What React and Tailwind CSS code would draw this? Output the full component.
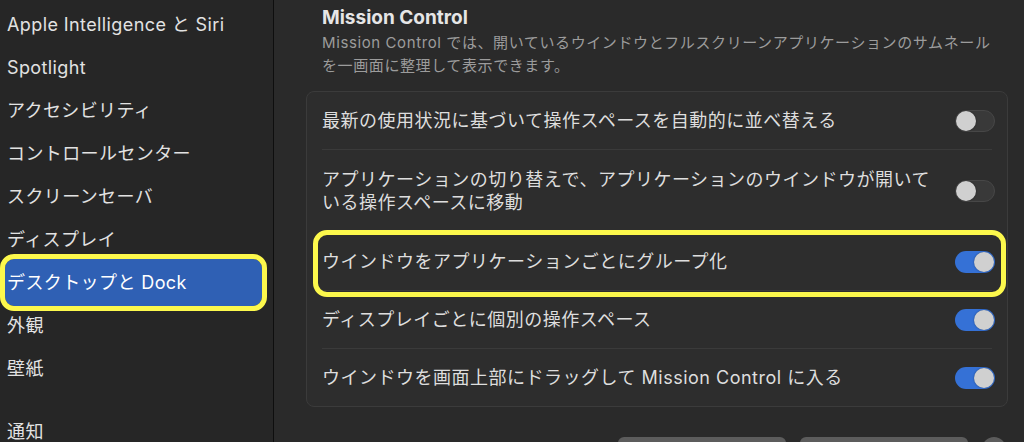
import React from "react";

const sidebarItems = [
  "Apple Intelligence と Siri",
  "Spotlight",
  "アクセシビリティ",
  "コントロールセンター",
  "スクリーンセーバ",
  "ディスプレイ",
  "デスクトップと Dock",
  "外観",
  "壁紙",
];

const Toggle = ({ on }) => (
  <div
    className={`flex h-[22px] w-[40px] shrink-0 items-center rounded-full ${
      on ? "justify-end bg-[#3571d6] px-[1px]" : "justify-start border border-[#474747] bg-[#393939]"
    }`}
  >
    <div className="h-[20px] w-[20px] rounded-full bg-[#d0d0d0] shadow-[0_0_2px_rgba(0,0,0,0.4)]" />
  </div>
);

const Row = ({ children, on, highlight, tall }) => (
  <div className={`relative flex items-center justify-between pl-[15px] pr-[12px] ${tall ? "py-[18px]" : "py-[17px]"}`}>
    <p className="text-[18px] leading-[23px] tracking-[0.5px] text-[#dedede]">{children}</p>
    <Toggle on={on} />
    {/* annotation box */}
    {highlight && (
      <div className="pointer-events-none absolute -top-[3px] -bottom-[7px] left-[6px] right-[1px] rounded-[14px] border-[5px] border-[#fcf84c]" />
    )}
  </div>
);

const Divider = () => <div className="mx-[15px] h-px bg-[#3a3a3a]" />;

export default function App() {
  return (
    <div className="flex h-[442px] w-[1024px] overflow-hidden bg-[#2a2a2a] font-['Inter','Noto_Sans_CJK_JP',sans-serif]">
      {/* Sidebar */}
      <aside className="w-[274px] shrink-0 border-r border-[#0e0e0e] bg-[#262626] pt-[3px] tracking-[0.4px]">
        {sidebarItems.map((item) =>
          item === "デスクトップと Dock" ? (
            <div
              key={item}
              className="-my-[2px] ml-[5px] flex h-[47px] w-[257px] items-center rounded-[9px] bg-[#2f60b4] px-[2px] text-[18px] text-white outline-[5px] outline-[#fcf84c]"
            >
              {item}
            </div>
          ) : (
            <div key={item} className="flex h-[43px] items-center px-[7px] text-[18px] text-[#e2e2e2]">
              {item}
            </div>
          )
        )}
        <div className="mt-[20px] flex h-[43px] items-center px-[7px] text-[18px] text-[#e2e2e2]">通知</div>
      </aside>

      {/* Main */}
      <main className="flex-1 pl-[32px] pr-[16px]">
        <h2 className="pl-[16px] pt-[6px] text-[19px] font-bold leading-[24px] text-[#e6e6e6]">Mission Control</h2>
        <p className="pl-[16px] pt-[1px] text-[15px] leading-[23px] tracking-[0.6px] text-[#9c9c9c]">
          Mission Control では、開いているウインドウとフルスクリーンアプリケーションのサムネール
          <br />
          を一画面に整理して表示できます。
        </p>

        <div className="mt-[14px] rounded-[8px] border border-[#3b3b3b] bg-[#2d2d2d]">
          <Row on={false}>最新の使用状況に基づいて操作スペースを自動的に並べ替える</Row>
          <Divider />
          <Row on={false} tall>
            アプリケーションの切り替えで、アプリケーションのウインドウが開いて
            <br />
            いる操作スペースに移動
          </Row>
          <Divider />
          <Row on highlight>
            ウインドウをアプリケーションごとにグループ化
          </Row>
          <Divider />
          <Row on>ディスプレイごとに個別の操作スペース</Row>
          <Divider />
          <Row on>ウインドウを画面上部にドラッグして Mission Control に入る</Row>
        </div>

        <div className="mt-[30px] flex justify-end gap-[14px] pr-[2px]">
          <div className="h-[30px] w-[168px] rounded-[6px] bg-[#5c5c5c]" />
          <div className="h-[30px] w-[168px] rounded-[6px] bg-[#5c5c5c]" />
          <div className="h-[24px] w-[24px] rounded-full bg-[#5c5c5c]" />
        </div>
      </main>
    </div>
  );
}
